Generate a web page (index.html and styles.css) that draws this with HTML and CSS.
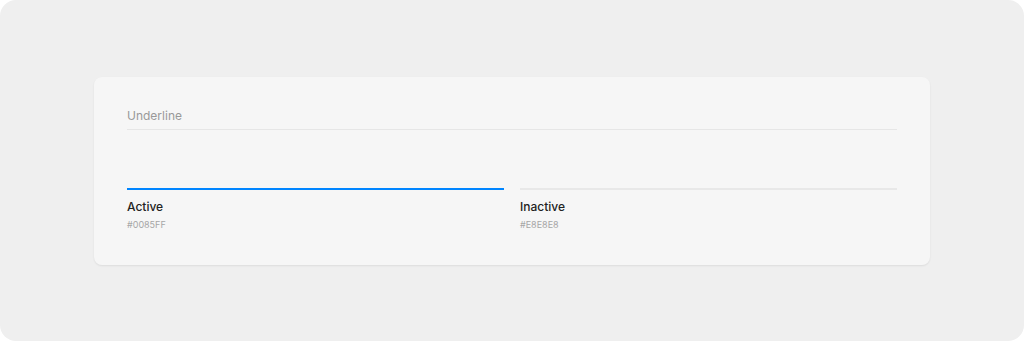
FILE: index.html
```html
<html>
<head>
    <meta charset="utf-8">
    <title>Underline</title>
    <link rel="stylesheet" href="styles.css">
</head>
<body>
<div class="frame">
    <section class="card">
        <h2 class="card-title">Underline</h2>
        <div class="swatches">
            <div class="swatch">
                <div class="line line-active"></div>
                <p class="name">Active</p>
                <p class="hex">#0085FF</p>
            </div>
            <div class="swatch">
                <div class="line line-inactive"></div>
                <p class="name">Inactive</p>
                <p class="hex">#E8E8E8</p>
            </div>
        </div>
    </section>
</div>
</body>
</html>
```
FILE: styles.css
```css
html {
    background: #fff;
}

body {
    margin: 0;
    font-family: Inter, 'Noto Sans', sans-serif;
}

.frame {
    width: 1024px;
    height: 341px;
    box-sizing: border-box;
    background: #efefef;
    border-radius: 16px;
    padding: 77px 94px 0;
}

.card {
    height: 188px;
    box-sizing: border-box;
    background: #f6f6f6;
    border-radius: 8px;
    box-shadow: 0 1px 2px rgba(0, 0, 0, .08);
    padding: 31px 33px 0;
}

.card-title {
    margin: 0;
    font-size: 12px;
    font-weight: 400;
    line-height: 16px;
    color: #999;
    padding-bottom: 5px;
    border-bottom: 1px solid #e6e6e6;
}

.swatches {
    display: flex;
    gap: 16px;
    padding-top: 58px;
}

.swatch {
    flex: 1;
}

.line {
    height: 2px;
}

.line-active {
    background: #0085ff;
}

.line-inactive {
    background: #e8e8e8;
}

.name {
    margin: 9px 0 0;
    font-size: 12px;
    line-height: 16px;
    font-weight: 500;
    color: #222;
}

.hex {
    margin: 4px 0 0;
    font-size: 9px;
    line-height: 12px;
    color: #a6a6a6;
}
```
